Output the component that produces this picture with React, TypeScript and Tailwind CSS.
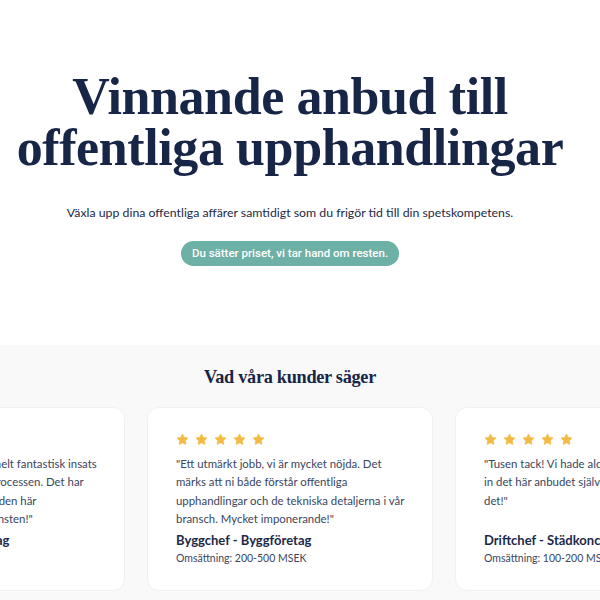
import { Star } from "lucide-react";

// \n forces the line breaks in the quotes
const testimonials = [
  {
    quote:
      "\"Ni har verkligen gjort en helt fantastisk insats\nunder hela upphandlingsprocessen. Det har\ngjort stor skillnad för oss i den här\nupphandlingen. Tack för vinsten!\"",
    role: "Affärschef - Byggföretag",
    revenue: "Omsättning: 50-100 MSEK",
  },
  {
    quote:
      "\"Ett utmärkt jobb, vi är mycket nöjda. Det märks att ni både förstår offentliga upphandlingar och de tekniska detaljerna i vår bransch. Mycket imponerande!\"",
    role: "Byggchef - Byggföretag",
    revenue: "Omsättning: 200-500 MSEK",
  },
  {
    quote:
      "\"Tusen tack! Vi hade aldrig kunnat lämna\nin det här anbudet själva, än mindre vinna\ndet!\"",
    role: "Driftchef - Städkoncern",
    revenue: "Omsättning: 100-200 MSEK",
  },
];

function Stars() {
  return (
    <div className="flex gap-[6px]">
      {[0, 1, 2, 3, 4].map((i) => (
        <Star
          key={i}
          size={13}
          strokeWidth={1}
          className="fill-[#f4bb44] text-[#f4bb44]"
        />
      ))}
    </div>
  );
}

function TestimonialCard({
  quote,
  role,
  revenue,
}: {
  quote: string;
  role: string;
  revenue: string;
}) {
  return (
    <div className="flex h-[184px] w-[286px] shrink-0 flex-col rounded-xl border border-[#f0f1f3] bg-white pt-[25px] pr-[22px] pb-[24px] pl-[28px]">
      <Stars />
      <p className="mt-[9px] whitespace-pre-line text-[11.4px] leading-[18.3px] text-[#3a4560]">
        {quote}
      </p>
      <div className="mt-auto">
        <div className="text-[13px] font-bold leading-[18px] text-[#1c2947]">
          {role}
        </div>
        <div className="mt-[1px] text-[10.5px] leading-[16px] text-[#3a4560]">
          {revenue}
        </div>
      </div>
    </div>
  );
}

export default function App() {
  return (
    <div
      className="min-h-[600px] w-[600px] overflow-hidden bg-white"
      style={{ fontFamily: "Lato, 'Open Sans', sans-serif" }}
    >
      {/* Hero */}
      <section className="flex flex-col items-center pr-5 pt-[71px] pb-[79px]">
        <h1
          className="text-center text-[52px] font-bold leading-[51px] tracking-[-0.4px] text-[#172647]"
          style={{ fontFamily: "'Liberation Serif', serif" }}
        >
          Vinnande anbud till
          <br />
          offentliga upphandlingar
        </h1>
        <p className="mt-[30px] text-[12.3px] leading-[20px] text-[#1c2947]">
          Växla upp dina offentliga affärer samtidigt som du frigör tid till din
          spetskompetens.
        </p>
        <button
          className="mt-[18px] h-[25px] rounded-full bg-[#6cb0a6] px-[11px] text-[11.5px] font-medium text-white"
          style={{ fontFamily: "Roboto, 'Liberation Sans', sans-serif" }}
        >
          Du sätter priset, vi tar hand om resten.
        </button>
      </section>

      {/* Testimonials */}
      <section className="bg-[#f9f9fa] pt-[21px] pb-[9px]">
        <h2
          className="pr-5 text-center text-[18.3px] font-bold leading-[22px] tracking-[-0.3px] text-[#172647]"
          style={{ fontFamily: "'Liberation Serif', serif" }}
        >
          Vad våra kunder säger
        </h2>
        <div className="mt-[19px] ml-[-161px] flex gap-[22px]">
          {testimonials.map((t) => (
            <TestimonialCard key={t.role} {...t} />
          ))}
        </div>
      </section>
    </div>
  );
}
